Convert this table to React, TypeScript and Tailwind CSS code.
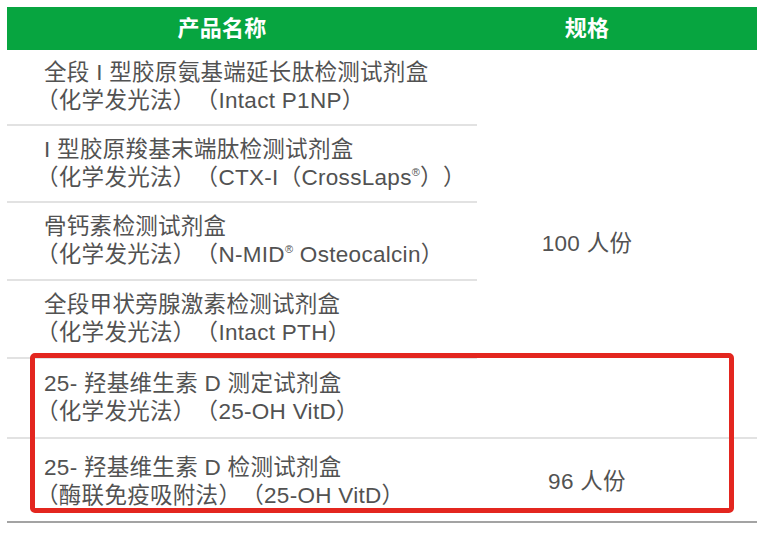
import React from 'react';

interface Product {
  name: React.ReactNode;
  method: React.ReactNode;
  h: string;
}

const products: Product[] = [
  { name: '全段 I 型胶原氨基端延长肽检测试剂盒', method: '（化学发光法）（Intact P1NP）', h: 'h-[76px]' },
  {
    name: 'I 型胶原羧基末端肽检测试剂盒',
    method: (
      <>
        （化学发光法）（CTX-I（CrossLaps<sup className="text-[11px] -top-[9px]">®</sup>））
      </>
    ),
    h: 'h-[77px]',
  },
  {
    name: '骨钙素检测试剂盒',
    method: (
      <>
        （化学发光法）（N-MID<sup className="text-[11px] -top-[9px]">®</sup> Osteocalcin）
      </>
    ),
    h: 'h-[78px]',
  },
  { name: '全段甲状旁腺激素检测试剂盒', method: '（化学发光法）（Intact PTH）', h: 'h-[78px]' },
  { name: '25- 羟基维生素 D 测定试剂盒', method: '（化学发光法）（25-OH VitD）', h: 'h-[80px]' },
];

const ProductCell: React.FC<{ p: Product }> = ({ p }) => (
  <div className={`${p.h} flex flex-col justify-center pl-[37px] border-b-2 border-[#e2e2e2]`}>
    <div>{p.name}</div>
    <div className="-ml-[8px]">{p.method}</div>
  </div>
);

export default function App() {
  return (
    <div className="w-[764px] h-[534px] bg-white pt-[7px] pl-[7px] relative">
      <div
        className="w-[750px] text-[22.5px] leading-[28px] text-[#525252] tracking-[0.3px] [text-spacing-trim:space-all]"
        style={{ fontFamily: '"Liberation Sans", "Noto Sans CJK SC", sans-serif' }}
      >
        <div className="flex h-[43px] bg-[#07a540] text-white font-bold text-[22px]">
          <div className="w-[470px] pr-[40px] flex items-center justify-center">产品名称</div>
          <div className="w-[280px] pr-[60px] flex items-center justify-center">规格</div>
        </div>
        <div className="flex">
          <div className="w-[470px]">
            {products.map((p, i) => (
              <ProductCell key={i} p={p} />
            ))}
          </div>
          <div className="w-[280px] pr-[60px] flex items-center justify-center border-b-2 border-[#e2e2e2]">
            100 人份
          </div>
        </div>
        <div className="flex border-b-2 border-[#a3a3a3]">
          <div className="w-[470px] h-[82px] flex flex-col justify-center pl-[37px] pt-[4px]">
            <div>25- 羟基维生素 D 检测试剂盒</div>
            <div className="-ml-[8px]">（酶联免疫吸附法）（25-OH VitD）</div>
          </div>
          <div className="w-[280px] pr-[60px] flex items-center justify-center pt-[4px]">96 人份</div>
        </div>
      </div>
      <div className="absolute left-[30px] top-[353px] w-[704px] h-[160px] border-[5px] border-[#e3261f] rounded-[5px]" />
    </div>
  );
}
